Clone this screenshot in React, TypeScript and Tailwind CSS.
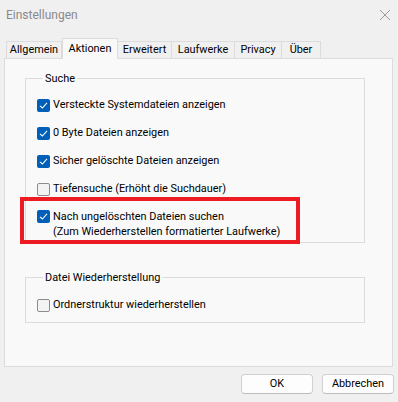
import React from 'react';

const tabs = [
  { label: "Allgemein", w: "w-[56px]" },
  { label: "Aktionen", w: "w-[56px]", active: true },
  { label: "Erweitert", w: "w-[54px]" },
  { label: "Laufwerke", w: "w-[63px]" },
  { label: "Privacy", w: "w-[47px]" },
  { label: "Über", w: "w-[39px]" },
];

const searchOptions = [
  { label: "Versteckte Systemdateien anzeigen", checked: true },
  { label: "0 Byte Dateien anzeigen", checked: true },
  { label: "Sicher gelöschte Dateien anzeigen", checked: true },
  { label: "Tiefensuche (Erhöht die Suchdauer)", checked: false },
];

function Checkbox({ checked }: { checked: boolean }) {
  if (checked) {
    return (
      <span className="w-[13px] h-[13px] shrink-0 rounded-[2px] bg-[#005fb8] flex items-center justify-center">
        <svg width="9" height="9" viewBox="0 0 9 9" fill="none">
          <path d="M1 4.8 L3.4 7 L8 1.8" stroke="white" strokeWidth="1.1" />
        </svg>
      </span>
    );
  }
  return <span className="w-[13px] h-[13px] shrink-0 rounded-[2px] border border-[#8d8d8d] bg-[#f3f3f3]" />;
}

function Option({ label, checked }: { label: string; checked: boolean }) {
  return (
    <div className="flex items-center gap-[3px] h-[16px]">
      <Checkbox checked={checked} />
      <span>{label}</span>
    </div>
  );
}

export default function App() {
  return (
    <div
      className="w-[398px] h-[402px] bg-[#f0f0f0] text-[10.9px] text-black flex flex-col overflow-hidden"
      style={{ fontFamily: 'Roboto, "Noto Sans", sans-serif' }}
    >
      {/* Title bar */}
      <div className="h-[30px] flex items-center justify-between pl-[6px] pr-[6px]">
        <span className="text-[12px] text-[#8a8a8a]">Einstellungen</span>
        <svg width="12" height="12" viewBox="0 0 12 12" className="mr-[1px]">
          <path d="M1 1 L11 11 M11 1 L1 11" stroke="#9a9a9a" strokeWidth="1" />
        </svg>
      </div>

      {/* Tabs */}
      <div className="flex items-end pl-[6px] pt-[7px] h-[28px]">
        {tabs.map((t) =>
          t.active ? (
            <div
              key={t.label}
              className={`${t.w} h-[21px] -mb-px relative z-10 bg-[#f9f9f9] border border-b-0 border-[#dcdcdc] flex items-start justify-center pt-[2px]`}
            >
              {t.label}
            </div>
          ) : (
            <div
              key={t.label}
              className={`${t.w} h-[17px] bg-[#f0f0f0] border border-l-0 first:border-l border-b-0 border-[#dcdcdc] flex items-center justify-center`}
            >
              {t.label}
            </div>
          )
        )}
      </div>

      {/* Panel */}
      <div className="relative mx-[4px] mr-[5px] h-[309px] bg-[#f9f9f9] border border-[#dcdcdc] pt-[12px] pl-[20px] pr-[27px]">
        <fieldset className="border border-[#dcdcdc] h-[172px] px-[11px]">
          <legend className="ml-[6px] px-[2px] leading-[15px]">Suche</legend>
          <div className="flex flex-col gap-[12px] pt-[11px]">
            {searchOptions.map((o) => (
              <Option key={o.label} label={o.label} checked={o.checked} />
            ))}
            <div className="flex items-start gap-[3px]">
              <span className="mt-[1px]">
                <Checkbox checked />
              </span>
              <span className="leading-[15px]">
                Nach ungelöschten Dateien suchen
                <br />
                (Zum Wiederherstellen formatierter Laufwerke)
              </span>
            </div>
          </div>
        </fieldset>

        <fieldset className="mt-[27px] border border-[#dcdcdc] h-[53px] px-[11px]">
          <legend className="ml-[6px] px-[2px] leading-[15px]">Datei Wiederherstellung</legend>
          <div className="pt-[12px]">
            <Option label="Ordnerstruktur wiederherstellen" checked={false} />
          </div>
        </fieldset>

        {/* highlight annotation */}
        <div className="absolute left-[15px] top-[138px] w-[280px] h-[47px] border-[4px] border-[#ed1c24]" />
      </div>

      {/* Buttons */}
      <div className="flex justify-end gap-[9px] pr-[4px] pt-[7px]">
        <button className="w-[72px] h-[20px] rounded-[4px] bg-[#fdfdfd] border border-[#d0d0d0] border-b-[#bcbcbc]">OK</button>
        <button className="w-[72px] h-[20px] rounded-[4px] bg-[#fdfdfd] border border-[#d0d0d0] border-b-[#bcbcbc]">Abbrechen</button>
      </div>
    </div>
  );
}
